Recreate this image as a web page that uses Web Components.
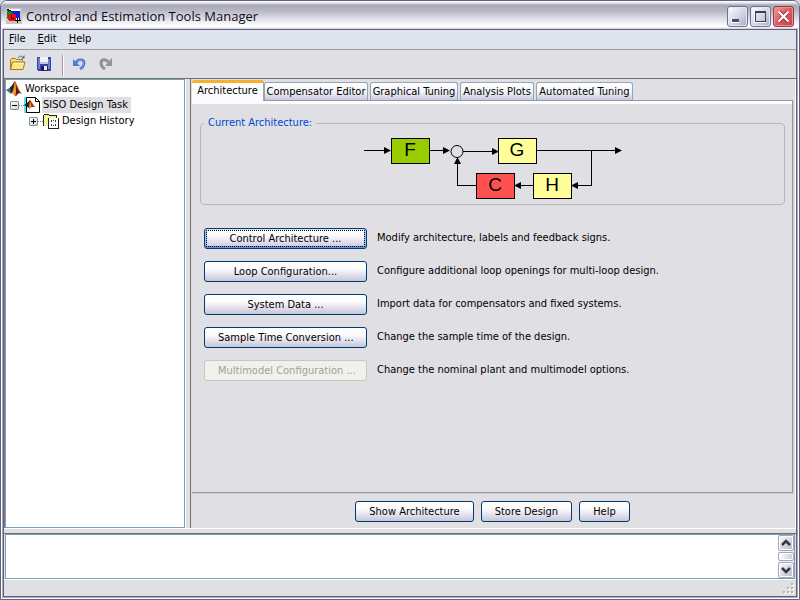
<!DOCTYPE html>
<html lang="en">
<head>
<meta charset="utf-8">
<title>Control and Estimation Tools Manager</title>
<style>
html,body{margin:0;height:100%}
body{background:#d8d8de;font:11px/16px "DejaVu Sans Condensed","Noto Sans",sans-serif;color:#000;--face:#e0dfe3;--blue:#7b9ebd}
</style>
</head>
<body>
<tools-window></tools-window>
<script>
const define = (name, html, setup) => customElements.define(name, class extends HTMLElement {
  connectedCallback() {
    if (this.shadowRoot) return;
    const t = document.createElement('template');
    t.innerHTML = typeof html === 'function' ? html(this) : html;
    this.attachShadow({mode: 'open'}).append(t.content.cloneNode(true));
    if (setup) setup(this);
  }
});

define('title-bar', `
<style>
:host{display:flex;align-items:center;height:28px;box-sizing:border-box;padding:2px 5px 0;border-radius:6px 6px 0 0;background:linear-gradient(#ffffff 0,#e4e4ec 2px,#a9a9bb 4px,#b4b4c3 9px,#d2d2dc 15px,#f2f2f6 22px,#fff 25px,#fff 26px,#c9c9d6 28px)}
h1{flex:1;margin:0 0 0 4px;font:500 13px/18px "Open Sans","Noto Sans",sans-serif;color:#0c0c14}
.b{display:flex;gap:2px}
button{width:21px;height:21px;padding:0;border:1px solid #6e7193;border-radius:3px;background:linear-gradient(135deg,#fdfdff,#d6d7e6 50%,#a9abc8);box-shadow:inset 0 0 0 1px #e9e9f3}
button.x{border-color:#8c3f4c;background:linear-gradient(135deg,#f39a98,#e25a5c 50%,#c04046);box-shadow:inset 0 0 0 1px #ef8f8e}
svg{display:block}
</style>
<svg width="16" height="16" shape-rendering="crispEdges"><path fill="#c8c6c4" d="M0 0h16v16H0z"/><path fill="#fff" d="M1 1h13v11H1z"/><path fill="#138a2a" d="M1 1l8 4-8 6z"/><path fill="#000" d="M1 1h1l7 3v1L1 2zM13 5h1v8h-2v-1h1z"/><path fill="#1c1ccf" d="M6 3h8v7H6z"/><circle cx="6" cy="9.500" r="4" fill="#f20d0d"/><path fill="#000" d="M5 7h1v3h2v1H5zM9 12h6v1H9zM11 10h1v5h-1z"/></svg>
<h1>Control and Estimation Tools Manager</h1>
<div class="b">
<button aria-label="Minimize"><svg width="19" height="19" shape-rendering="crispEdges"><path fill="#fff" d="M3 12h8v4H3z"/><path fill="#4b4a6c" d="M4 12h7v3H4z"/></svg></button>
<button aria-label="Maximize"><svg width="19" height="19" shape-rendering="crispEdges"><path fill="none" stroke="#fff" d="M3.500 4.500h11v11h-11z"/><path fill="none" stroke="#3d3c5e" d="M4.500 5.500h10v9h-10z"/><path fill="#3d3c5e" d="M4 4h11v2H4z"/></svg></button>
<button class="x" aria-label="Close"><svg width="19" height="19"><path d="M5 4.500l9 10M14 4.500l-9 10" stroke="#8c2c34" stroke-width="4"/><path d="M4.500 4.500l10 10M14.500 4.500l-10 10" stroke="#fff" stroke-width="2.400"/></svg></button>
</div>`);

define('menu-bar', `
<style>
:host{display:flex;height:19px;padding-left:1px;background:#dfe3ec;border-bottom:1px solid #9c9ca0;box-shadow:0 1px #fff}
button{border:0;background:none;font:inherit;color:inherit;padding:0 8px 1px 4px}
button u{text-underline-offset:1px}
</style>
<button><u>F</u>ile</button><button><u>E</u>dit</button><button><u>H</u>elp</button>`);

define('tool-bar', `
<style>
:host{display:flex;align-items:center;height:26px;padding:1px 0 0 5px;background:var(--face);border-bottom:1px solid #72725f}
button{border:0;background:none;padding:0 0 3px;margin-right:10px}
svg{display:block}
i{width:1px;height:21px;background:#9a9aa2;box-shadow:1px 0 #fff;margin:0 9px 0 0}
</style>
<button aria-label="Open"><svg width="17" height="17"><path d="M1.500 14.500v-10l1-1h4l1 1h6v2" fill="#f6dc7c" stroke="#a67a17"/><path d="M1.500 14.500l2-7.500h12.500l-2 7.500z" fill="#fbe58c" stroke="#a67a17"/><path d="M4.500 8.500h10" stroke="#fff8cf"/><path d="M9 3c2-3 4-2 5 0" fill="none" stroke="#4d6e9d"/><path d="M12 3.500h3.500V0z" fill="#4d6e9d"/></svg></button>
<button aria-label="Save"><svg width="16" height="16" shape-rendering="crispEdges"><path d="M1 1h13l1 1v13H2l-1-1z" fill="#3a43a5"/><path d="M2 2h2v11H2zM12 3h2v10h-2z" fill="#6f7ad2"/><path d="M4 1h8v7H4z" fill="#eef2fb"/><path d="M4 6h8v2H4z" fill="#b9c7e6"/><path d="M5 10h7v5H5z" fill="#22266f"/><path d="M8 10h3v4H8z" fill="#e6eaf4"/><path d="M6 11h2v3H6z" fill="#13163e"/></svg></button>
<i></i>
<button aria-label="Undo"><svg width="16" height="16"><path d="M4 6.500c2-3.500 8-4 8 .500 0 3-1.500 4.500-4 6" fill="none" stroke="#3b6fd0" stroke-width="2.600"/><path d="M4.500 6c3-3 7-2.500 7 1.500 0 2-1 3.500-3 5" fill="none" stroke="#7fb0f4" stroke-width="1"/><path d="M1 3v7h7z" fill="#4a80dc"/></svg></button>
<button aria-label="Redo"><svg width="16" height="16"><path d="M10.500 6c-3-3.500-7.500-3-7.500 1 0 2.500 1.500 4.500 4 6" fill="none" stroke="#929292" stroke-width="3"/><path d="M14 2v8H7z" fill="#929292"/></svg></button>`);

define('tree-item', e => `
<style>
:host{display:block}
.r{display:flex;height:16px;align-items:center}
.r>svg,::slotted(svg){flex:none}
.t{padding:0 3px 0 1px;white-space:nowrap}
:host([selected]) .t{background:var(--face)}
button{width:9px;height:9px;padding:0;border:1px solid #7f8fa6;border-radius:1px;background:linear-gradient(135deg,#fff,#d5d2c8);display:block;flex:none}
button svg{display:block}
.d{width:5px;border-top:1px dotted #888;flex:none}
.c{padding-left:19px}
:host([root]) .c{padding-left:4px}
slot[name=icon]{display:block;margin-right:2px}
</style>
<div class="r">${e.hasAttribute('root') ? '' : `<button aria-label="Toggle"><svg width="7" height="7" shape-rendering="crispEdges"><path d="M1 3h5v1H1z${e.hasAttribute('open') ? '' : 'M3 1h1v5H3z'}"/></svg></button><span class="d"></span>`}<slot name="icon"></slot><span class="t">${e.getAttribute('label')}</span></div>
<div class="c"><slot></slot></div>`);

define('workspace-tree', `
<style>
:host{display:block;box-sizing:border-box;background:#fff;border:1px solid var(--blue);padding-top:1px}
svg{display:block}
</style>
<tree-item root label="Workspace">
<svg slot="icon" width="16" height="16"><path d="M0 9l5-3 3 4-3 3z" fill="#3b7189"/><path d="M4 6c2 0 3-4 5-6l-1 9-3 3z" fill="#182430"/><path d="M9 0c2 3 4 10 7 13-3-2-4-1-6 2-1 1-2-2-4-3 2-3 2-8 3-12z" fill="#c9461b"/><path d="M9 0c-1 5-1 8-3 12 2 1 3 2 3 3l1-5z" fill="#f3a02b"/><path d="M10 4c1 4 3 7 6 9-3-2-4-1-6 2z" fill="#5e170d"/></svg>
<tree-item label="SISO Design Task" open selected>
<svg slot="icon" width="16" height="16"><path d="M0 0h4v16H0z" fill="#4fe6ee"/><path d="M2.500.500h9l4 4v11h-13z" fill="#fff" stroke="#000"/><path d="M11.500.500v4h4" fill="none" stroke="#000"/><path d="M0 8l3-2 3-3 2 6-3 2z" fill="#17242c"/><path d="M6 3c2 2 3 5 5 7H7l-2 2z" fill="#c8270e"/><path d="M6 4l1 5-2 2z" fill="#f5c127"/></svg>
<tree-item label="Design History">
<svg slot="icon" width="16" height="16" shape-rendering="crispEdges"><path d="M0 2h1V1h5v1h8v3h2v11H5v-3H0z" fill="#222"/><path d="M1 2h5v1h7v2H5v8H1z" fill="#f6f39a"/><path d="M6 5h9v10H6z" fill="#fff"/><path d="M8 7h1v2H8zM12 7h1v2h-1zM8 11h1v2H8zM12 11h1v2h-1zM10 7h1v1h-1zM10 12h1v1h-1z" fill="#26473c"/></svg>
</tree-item></tree-item></tree-item>`);

define('push-button', e => `
<style>
:host{display:block}
button{display:block;width:100%;height:21px;box-sizing:border-box;padding:0 13px;border:1px solid #003c74;border-radius:3px;font:inherit;color:#000;white-space:nowrap;background:linear-gradient(#fff,#fbfbfd 35%,#e4e3ee 65%,#c6c5d7);line-height:19px}
:host([focused]) button{box-shadow:inset 0 1px #cee0fb,inset 0 -2px #6d8fdd,inset 2px 0 #a9c0ee,inset -2px 0 #a9c0ee;outline:1px dotted #000;outline-offset:-3px}
button:disabled{color:#a3a294;background:#f1f1ec;border-color:#c9c7ba}
</style>
<button ${e.hasAttribute('disabled') ? 'disabled' : ''}><slot></slot></button>`);

define('tab-strip', `
<style>
:host{display:flex;align-items:flex-end;height:20px;gap:2px}
button{box-sizing:border-box;height:18px;padding:0;font:inherit;color:#000;white-space:nowrap;border:1px solid #91a7b4;border-bottom:0;border-radius:3px 3px 0 0;background:linear-gradient(#fff,#f5f5fa 50%,#c9c8dd);flex:none}
button[aria-selected=true]{height:21px;width:72px;margin:0 -2px -1px 0;border:0;border-right:1px solid #91a7b4;border-top:3px solid #f9ae2e;background:#fdfdff;padding-bottom:2px;position:relative;z-index:1}
.l{width:104px}.m{width:88px}.s{width:74px}.n{width:97px}
</style>
<button role="tab" aria-selected="true">Architecture</button><button role="tab" class="l">Compensator Editor</button><button role="tab" class="m">Graphical Tuning</button><button role="tab" class="s">Analysis Plots</button><button role="tab" class="n">Automated Tuning</button>`);

define('architecture-diagram', `
<style>
:host{display:block}
svg{display:block;margin:auto}
text{font:19px "Liberation Sans",sans-serif;text-anchor:middle}
</style>
<svg width="260" height="72" viewBox="362 132 260 72" role="img" aria-label="Feedback architecture">
<g fill="none" stroke="#000" shape-rendering="crispEdges"><path d="M363 150.500h20M428 150.500h20M462 151.500h30M536 150.500h79M590.500 150v35.500H577M532 185.500H520M475 185.500H456.500V162"/></g>
<circle cx="456" cy="151.500" r="6" fill="none" stroke="#000"/>
<path d="M383 147v7l7-3.500zM442 147v7l7-3.500zM491 148v7l7-3.500zM614 147v7l7-3.500zM577 182v7l-7-3.500zM520 182v7l-7-3.500zM453 164h7l-3.500-7z"/>
<g stroke="#000" shape-rendering="crispEdges"><path d="M390.500 138.500h38v25h-38z" fill="#99cc00"/><path d="M497.500 138.500h38v25h-38zM532.500 173.500h38v25h-38z" fill="#ffff99"/><path d="M475.500 173.500h38v25h-38z" fill="#ff5050"/></g>
<text x="409" y="156">F</text><text x="516" y="156">G</text><text x="494" y="191">C</text><text x="551" y="191">H</text>
</svg>`);

define('architecture-page', `
<style>
:host{display:block;box-sizing:border-box;padding:14px 7px 8px 8px;border-top:1px solid #8b9a9f;border-right:1px solid #919b9c;border-bottom:1px solid #919b9c;box-shadow:inset 0 3px #fcfcfe,1px 1px #d0cebf}
fieldset{margin:0;padding:0;min-width:0;height:90px;box-sizing:border-box;border:1px solid #b6b5ba;border-radius:4px}
legend{margin-left:3px;padding:0 4px;color:#0046d5}
architecture-diagram{margin-top:1px}
.g{display:grid;grid-template-columns:163px 1fr;column-gap:10px;row-gap:12px;align-items:center;padding:23px 0 0 4px}
.g span{padding-bottom:1px}
</style>
<fieldset><legend>Current Architecture:</legend><architecture-diagram></architecture-diagram></fieldset>
<div class="g">
<push-button focused>Control Architecture ...</push-button><span>Modify architecture, labels and feedback signs.</span>
<push-button>Loop Configuration...</push-button><span>Configure additional loop openings for multi-loop design.</span>
<push-button>System Data ...</push-button><span>Import data for compensators and fixed systems.</span>
<push-button>Sample Time Conversion ...</push-button><span>Change the sample time of the design.</span>
<push-button disabled>Multimodel Configuration ...</push-button><span>Change the nominal plant and multimodel options.</span>
</div>`);

define('message-log', `
<style>
:host{display:flex;box-sizing:border-box;background:#fff;border:1px solid var(--blue)}
textarea{flex:1;min-width:0;border:0;padding:2px;resize:none;outline:0;font:inherit;overflow:hidden;background:#fff}
.s{display:flex;flex-direction:column;width:16px;background:#f2f2f5;gap:1px}
button{width:16px;height:16px;padding:0;border:1px solid #a5a5b4;border-radius:2px;background:linear-gradient(135deg,#fff,#d2d3df 60%,#b9bacb);box-shadow:inset 0 0 0 1px #fff}
.t{flex:1;box-sizing:border-box;border:1px solid #a5a5b4;border-radius:2px;background:linear-gradient(90deg,#fff,#cbccda);box-shadow:inset 0 0 0 1px #fff}
svg{display:block}
path{fill:none;stroke:#35353f;stroke-width:2.500}
</style>
<textarea aria-label="Messages" readonly></textarea>
<div class="s"><button aria-label="Scroll up"><svg width="14" height="14"><path d="M3 9l4-4 4 4"/></svg></button><span class="t"></span><button aria-label="Scroll down"><svg width="14" height="14"><path d="M3 5l4 4 4-4"/></svg></button></div>`);

define('status-bar', `
<style>
:host{display:flex;justify-content:flex-end;align-items:flex-end;height:16px;background:var(--face);border-top:1px solid #fff}
</style>
<svg width="13" height="13" shape-rendering="crispEdges"><path fill="#fff" d="M9 1h2v2H9zM5 5h2v2H5zM9 5h2v2H9zM1 9h2v2H1zM5 9h2v2H5zM9 9h2v2H9z"/><path fill="#b8b4a3" d="M8 0h2v2H8zM4 4h2v2H4zM8 4h2v2H8zM0 8h2v2H0zM4 8h2v2H4zM8 8h2v2H8z"/></svg>`);

define('tools-window', `
<style>
:host{display:flex;flex-direction:column;min-height:100vh;box-sizing:border-box;border:1px solid #636180;border-radius:7px 7px 0 0;background:#fff;overflow:hidden}
.f{flex:1;display:flex;flex-direction:column;margin:0 1px 1px;border:1px solid #a9a8bf;border-top:0}
.i{flex:1;display:flex;flex-direction:column;border:1px solid #63617f;background:var(--face)}
tool-bar{padding-top:2px}
.m{flex:1;display:grid;grid-template-columns:182px 1fr}
workspace-tree{margin-left:1px}
.l{background:#7d7b78;border-right:1px solid #fff;display:grid}
.r{margin-left:4px;border-left:1px solid #6f6e62;border-right:1px solid #fff;padding:1px 2px 0 1px;display:flex;flex-direction:column}
architecture-page{flex:1}
.b{display:flex;justify-content:center;gap:7px;padding:8px 0 6px}
.k{height:4px;border-top:1px solid #fff;border-bottom:1px solid #72706c}
message-log{height:45px;margin:0 1px}
</style>
<title-bar></title-bar>
<div class="f"><div class="i">
<menu-bar></menu-bar>
<tool-bar></tool-bar>
<div class="m"><div class="l"><workspace-tree></workspace-tree></div>
<div class="r"><tab-strip></tab-strip><architecture-page></architecture-page>
<div class="b"><push-button>Show Architecture</push-button><push-button>Store Design</push-button><push-button>Help</push-button></div></div></div>
<div class="k"></div>
<message-log></message-log>
<status-bar></status-bar>
</div></div>`);
</script>
</body>
</html>
